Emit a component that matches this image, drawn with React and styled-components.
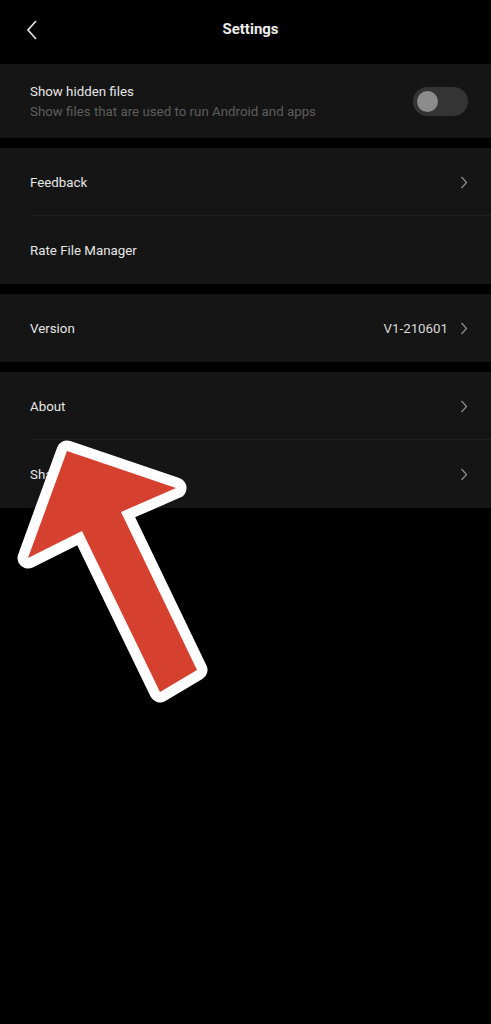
import React from "react";
import styled, { createGlobalStyle } from "styled-components";

const GlobalStyle = createGlobalStyle`
  html, body {
    margin: 0;
    padding: 0;
    background: #000;
  }
  body {
    font-family: Roboto, "Liberation Sans", sans-serif;
  }
`;

const Screen = styled.div`
  position: relative;
  width: 491px;
  height: 1024px;
  background: #000;
  overflow: hidden;
`;

const Header = styled.div`
  height: 64px;
  display: flex;
  align-items: center;
  justify-content: center;
  position: relative;
`;

const BackButton = styled.div`
  position: absolute;
  left: 24px;
  top: 19px;
  width: 18px;
  height: 22px;
  display: flex;
`;

const Title = styled.div`
  color: #ececec;
  font-size: 15px;
  font-weight: 700;
  margin: -7px 0 0 10px;
`;

const Section = styled.div`
  background: #151515;
  margin-bottom: 10px;
`;

const Row = styled.div`
  height: ${(p) => p.h || 68}px;
  display: flex;
  align-items: center;
  padding: 0 23px 0 30px;
  position: relative;
  ${(p) =>
    p.divider &&
    `&::after {
      content: "";
      position: absolute;
      left: 30px;
      right: 0;
      bottom: 0;
      height: 1px;
      background: #202020;
    }`}
`;

const Texts = styled.div`
  flex: 1;
  display: flex;
  flex-direction: column;
  gap: 5px;
`;

const Label = styled.div`
  color: #e6e6e6;
  font-size: 13.3px;
`;

const Sub = styled.div`
  color: #5e5e5e;
  font-size: 13.3px;
`;

const Value = styled.div`
  color: #d8d8d8;
  font-size: 13.3px;
  margin-right: 12px;
`;

const Toggle = styled.div`
  width: 55px;
  height: 29px;
  border-radius: 15px;
  background: #343434;
  display: flex;
  align-items: center;
  padding-left: 4px;
  box-sizing: border-box;
  margin-top: 1px;
`;

const Knob = styled.div`
  width: 21px;
  height: 21px;
  border-radius: 50%;
  background: #8c8c8c;
`;

const Arrow = styled.svg`
  position: absolute;
  left: 0;
  top: 0;
  pointer-events: none;
`;

const Chevron = () => (
  <svg width="8" height="13" viewBox="0 0 8 13">
    <path d="M1.5 1 L6.5 6.5 L1.5 12" fill="none" stroke="#8a8a8a" strokeWidth="1.3" />
  </svg>
);

export default function App() {
  return (
    <Screen>
      <GlobalStyle />
      <Header>
        <BackButton>
          <svg width="18" height="22" viewBox="0 0 18 22">
            <path d="M12 2 L4 11 L12 20" fill="none" stroke="#dcdcdc" strokeWidth="1.8" />
          </svg>
        </BackButton>
        <Title>Settings</Title>
      </Header>

      <Section>
        <Row h={74}>
          <Texts>
            <Label>Show hidden files</Label>
            <Sub>Show files that are used to run Android and apps</Sub>
          </Texts>
          <Toggle>
            <Knob />
          </Toggle>
        </Row>
      </Section>

      <Section>
        <Row divider>
          <Texts>
            <Label>Feedback</Label>
          </Texts>
          <Chevron />
        </Row>
        <Row>
          <Texts>
            <Label>Rate File Manager</Label>
          </Texts>
        </Row>
      </Section>

      <Section>
        <Row>
          <Texts>
            <Label>Version</Label>
          </Texts>
          <Value>V1-210601</Value>
          <Chevron />
        </Row>
      </Section>

      <Section>
        <Row divider>
          <Texts>
            <Label>About</Label>
          </Texts>
          <Chevron />
        </Row>
        <Row>
          <Texts>
            <Label>Share</Label>
          </Texts>
          <Chevron />
        </Row>
      </Section>

      <Arrow width="491" height="1024" viewBox="0 0 491 1024">
        <polygon
          points="67,451 176,488 121,512 197,670 160,692 82,531 28,558"
          fill="#d6402f"
          stroke="#ffffff"
          strokeWidth="21"
          strokeLinejoin="round"
          paintOrder="stroke"
        />
      </Arrow>
    </Screen>
  );
}
